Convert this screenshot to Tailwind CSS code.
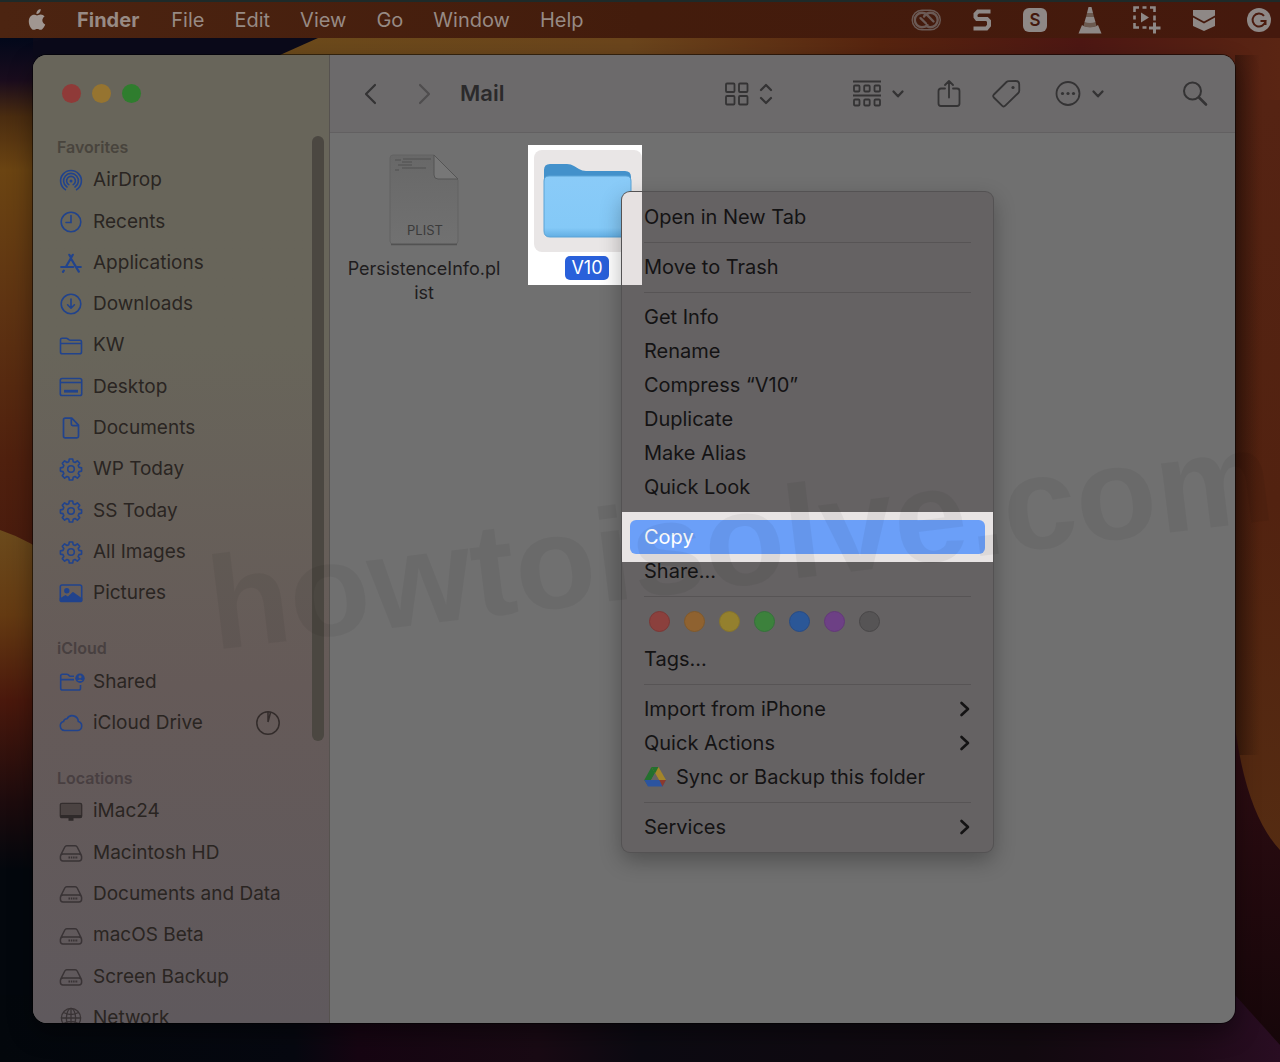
<!DOCTYPE html>
<html lang="en">
<head>
  <meta charset="UTF-8" />
  <title>Finder - Mail</title>
  <meta name="viewport" content="width=device-width, initial-scale=1" />
  <script src="https://cdn.jsdelivr.net/npm/@tailwindcss/browser@4"></script>
</head>
<body class="relative h-screen flex flex-col overflow-hidden bg-[#04080f] font-['Inter','Liberation_Sans',sans-serif] text-[#1f1d1e]">

  <!-- icon sprite -->
  <svg class="hidden" aria-hidden="true">
    <symbol id="airdrop" viewBox="0 0 24 24" fill="none" stroke="currentColor" stroke-width="1.6" stroke-linecap="round">
      <path d="M6.4 20.7a10.4 10.4 0 1 1 11.2 0M8 18a7.4 7.4 0 1 1 8 0M9.8 15.6a4.4 4.4 0 1 1 4.400 0"/><circle cx="12" cy="12" r="1.500" fill="currentColor" stroke="none"/>
    </symbol>
    <symbol id="clock" viewBox="0 0 24 24" fill="none" stroke="currentColor" stroke-width="1.6" stroke-linecap="round">
      <circle cx="12" cy="12" r="9.800"/><path d="M12 5.500v7H7"/>
    </symbol>
    <symbol id="apps" viewBox="0 0 24 24" fill="none" stroke="currentColor" stroke-width="2.200" stroke-linecap="round">
      <path d="M10.300 3.800l1.700 3M13.800 3.800L7 15.800M12.400 8.200l7.400 12.400M2.200 16h12M18.600 16h3.200M4.800 19.600l-.8 1.200"/>
    </symbol>
    <symbol id="download" viewBox="0 0 24 24" fill="none" stroke="currentColor" stroke-width="1.6" stroke-linecap="round" stroke-linejoin="round">
      <circle cx="12" cy="12" r="9.800"/><path d="M12 7v9M8.600 12.800L12 16.200l3.400-3.400"/>
    </symbol>
    <symbol id="folder" viewBox="0 0 24 24" fill="none" stroke="currentColor" stroke-width="1.6" stroke-linejoin="round">
      <path d="M1.500 18V5.800q0-1.600 1.600-1.600h4.200q.8 0 1.500.6l1 .9q.6.500 1.400.500h9.700q1.600 0 1.600 1.600V18q0 1.800-1.800 1.800H3.300Q1.500 19.800 1.500 18zM1.500 9.500h21"/>
    </symbol>
    <symbol id="desktop" viewBox="0 0 24 24" fill="none" stroke="currentColor" stroke-width="1.6">
      <rect x="1.300" y="3.500" width="21.400" height="17" rx="1.800"/><path d="M1.300 7.500h21.400"/><rect x="5" y="14.800" width="14" height="2.800" fill="currentColor" stroke="none"/>
    </symbol>
    <symbol id="doc" viewBox="0 0 24 24" fill="none" stroke="currentColor" stroke-width="1.7" stroke-linejoin="round">
      <path d="M4.500 3.800q0-1.600 1.600-1.600h6.700l6.700 7v11q0 1.600-1.600 1.600H6.100q-1.600 0-1.600-1.600zM12.300 2.500v5.600q0 1.500 1.500 1.500h5.500"/>
    </symbol>
    <symbol id="gear" viewBox="0 0 24 24" fill="none" stroke="currentColor" stroke-width="1.6" stroke-linejoin="round">
      <circle cx="12" cy="12" r="3.300"/><path d="M10.300 2h3.400l.5 2.700 1.900.8 2.300-1.600 2.300 2.300-1.500 2.300.8 1.900 2.600.5v3.200l-2.600.5-.8 1.900 1.500 2.300-2.300 2.300-2.300-1.600-1.900.8-.5 2.700h-3.400l-.5-2.700-1.900-.8-2.300 1.600-2.300-2.300 1.500-2.300-.8-1.900-2.600-.5v-3.200l2.600-.5.8-1.900-1.500-2.300 2.300-2.300 2.300 1.600 1.900-.8z"/>
    </symbol>
    <symbol id="picture" viewBox="0 0 24 24" fill="none" stroke="currentColor" stroke-width="1.6">
      <rect x="1.300" y="4" width="21.400" height="16.500" rx="1.800"/><circle cx="7.800" cy="9.800" r="1.900" fill="currentColor"/><path fill="currentColor" stroke-linejoin="round" d="M1.500 18l5-3.200 2.500 1.800 5-4.800 8.500 6.200v2H1.500z"/>
    </symbol>
    <symbol id="shared" viewBox="0 0 26 24" fill="none" stroke="currentColor" stroke-width="1.6" stroke-linejoin="round">
      <path d="M15 6.300h-3.200q-.8 0-1.400-.5l-1-.9q-.7-.6-1.500-.6H3.300q-1.600 0-1.600 1.600v12.300Q1.700 20 3.500 20h16.200q1.800 0 1.800-1.800V15M1.700 9.600H15"/>
      <circle cx="21" cy="8.200" r="4.700" fill="currentColor" stroke="none"/><circle cx="21" cy="6.700" r="1.500" fill="#645a58" stroke="none"/><path d="M18.300 11q2.700-3 5.400 0z" fill="#645a58" stroke="none"/>
    </symbol>
    <symbol id="cloud" viewBox="0 0 24 24" fill="none" stroke="currentColor" stroke-width="1.6">
      <path d="M5.600 19.500a4.600 4.600 0 0 1-1-9q.4-2.600 3.300-2.700a6.100 6.100 0 0 1 11.400 2.700 4.600 4.600 0 0 1-.6 9z"/>
    </symbol>
    <symbol id="imac" viewBox="0 0 24 24">
      <rect x="1.300" y="3.300" width="21.400" height="14.400" rx="1.600" fill="#4b4342" stroke="#342e2e" stroke-width="1.300"/><path d="M1.300 15h21.400v1.400q0 1.600-1.600 1.600H2.900q-1.600 0-1.600-1.600zM9.500 18h5v2.700h-5z" fill="#2f2a2a"/>
    </symbol>
    <symbol id="disk" viewBox="0 0 24 24" fill="none" stroke="currentColor" stroke-width="1.5" stroke-linejoin="round">
      <path d="M1.500 14.500L5.800 6q.6-1.200 2-1.200h8.400q1.400 0 2 1.200l4.300 8.500M4 13h16q2.600 0 2.600 2.700v1.600q0 2.700-2.600 2.700H4q-2.600 0-2.600-2.700v-1.600Q1.400 13 4 13z"/><path d="M9.500 16.500h9.500" stroke-dasharray="1.500 .8" stroke-width="2"/>
    </symbol>
    <symbol id="globe" viewBox="0 0 24 24" fill="none" stroke="currentColor" stroke-width="1.3">
      <circle cx="12" cy="12" r="9.600"/><ellipse cx="12" cy="12" rx="4.600" ry="9.600"/><path d="M12 2.400v19.200M2.400 12h19.200M4.500 6.500q7.500 4 15 0M4.500 17.500q7.500-4 15 0"/>
    </symbol>
    <symbol id="chev-r" viewBox="0 0 12 16" fill="none" stroke="currentColor" stroke-width="2.6" stroke-linecap="round" stroke-linejoin="round">
      <path d="M2.500 2l6.500 6-6.500 6"/>
    </symbol>
    <symbol id="chev-d" viewBox="0 0 14 10" fill="none" stroke="currentColor" stroke-width="2.3" stroke-linecap="round" stroke-linejoin="round">
      <path d="M2.500 2.500L7 7.300l4.500-4.800"/>
    </symbol>
  </svg>

  <!-- wallpaper -->
  <svg class="absolute inset-0 -z-10 w-full h-full" viewBox="0 0 1280 1062" preserveAspectRatio="none" aria-hidden="true">
    <defs>
      <linearGradient id="wLeft" x1="0" y1="0" x2="0" y2="1">
        <stop offset="0" stop-color="#02081a"/><stop offset=".07" stop-color="#1a0c1d"/><stop offset=".13" stop-color="#4a2c10"/><stop offset=".22" stop-color="#6b4412"/><stop offset=".45" stop-color="#5e3312"/><stop offset=".7" stop-color="#4f200e"/><stop offset="1" stop-color="#43160d"/>
      </linearGradient>
      <linearGradient id="wBlob" x1="0" y1="0" x2="0" y2="1">
        <stop offset="0" stop-color="#6b4a1c"/><stop offset=".25" stop-color="#643a12"/><stop offset=".5" stop-color="#4a180c"/><stop offset=".8" stop-color="#1d0b0d"/><stop offset="1" stop-color="#03070d"/>
      </linearGradient>
      <linearGradient id="wTop" x1="0" y1="0" x2="1" y2="0">
        <stop offset="0" stop-color="#6c4a1b"/><stop offset=".35" stop-color="#6b451c"/><stop offset=".6" stop-color="#57240f"/><stop offset=".8" stop-color="#4d1713"/><stop offset="1" stop-color="#5a2513"/>
      </linearGradient>
      <linearGradient id="wRight" x1="0" y1="0" x2="0" y2="1">
        <stop offset="0" stop-color="#552313"/><stop offset=".5" stop-color="#522210"/><stop offset="1" stop-color="#552d12"/>
      </linearGradient>
      <linearGradient id="wEdge" x1="0" y1="0" x2="1" y2="0">
        <stop offset="0" stop-color="#200c06" stop-opacity=".5"/><stop offset="1" stop-color="#200c06" stop-opacity="0"/>
      </linearGradient>
      <linearGradient id="wLow" x1="0" y1="0" x2="0" y2="1">
        <stop offset="0" stop-color="#300d13"/><stop offset="1" stop-color="#150609"/>
      </linearGradient>
      <linearGradient id="wFloor" x1="0" y1="0" x2="1" y2="0">
        <stop offset="0" stop-color="#03070c"/><stop offset=".23" stop-color="#060810"/><stop offset=".28" stop-color="#160512"/><stop offset=".42" stop-color="#190a14"/><stop offset=".5" stop-color="#0c0a12"/><stop offset=".8" stop-color="#120a10"/><stop offset=".93" stop-color="#1e0a18"/><stop offset="1" stop-color="#290d22"/>
      </linearGradient>
    </defs>
    <rect width="1280" height="1062" fill="#03070d"/>
    <path d="M0 38h330v602H0z" fill="url(#wLeft)"/>
    <path d="M0 530Q60 550 120 620V870H0z" fill="url(#wBlob)"/>
    <path d="M33 38h300v20H33z" fill="#0b0a1a"/>
    <path d="M318 38H1280v200H280V55z" fill="url(#wTop)"/>
    <path d="M1200 100h80v800h-80z" fill="url(#wRight)"/>
    <path d="M1235 55h25v700h-25z" fill="url(#wEdge)"/>
    <path d="M1232 700q10 110 48 150v212h-60z" fill="url(#wLow)"/>
    <path d="M0 995h1235l45 50v17H0z" fill="url(#wFloor)"/>
  </svg>

  <!-- menu bar -->
  <header class="flex h-[38px] shrink-0 items-center border-t-2 border-[#1e2a29] bg-linear-to-r from-[#4c2411] via-[#431c0c] to-[#45190d] pl-[27px] pr-[9px] text-[#978a84]">
    <svg class="w-5 h-6 mr-[30px] shrink-0" viewBox="0 0 20 24" fill="#a09691"><path d="M13.700 1q.2 2-1.100 3.500T9.400 6q-.2-1.900 1-3.300T13.700 1zM10 7.400c1 0 2-.9 3.700-.9 1.600 0 3 .8 3.900 2-3.300 2-2.800 6.500.6 7.900-.8 2.300-2.700 5.400-4.600 5.400-1.300 0-1.800-.8-3.400-.8s-2.100.8-3.400.8C4.500 21.800 1.800 17.600 1.800 13.400c0-4.300 2.700-6.700 5.100-6.700 1.500 0 2.400.7 3.100.7z"/></svg>
    <nav class="flex gap-[30px] text-xl leading-6">
      <button class="pr-0.5 font-bold">Finder</button>
      <button>File</button>
      <button>Edit</button>
      <button>View</button>
      <button>Go</button>
      <button>Window</button>
      <button>Help</button>
    </nav>
    <div class="ml-auto flex items-center gap-[31px] text-[#8e8886]">
      <svg class="w-[30px] h-6" viewBox="0 0 30 24" fill="none" stroke="#6b5a55" stroke-width="2.4" stroke-linecap="round"><path d="M11 2.200h8.500a9.800 9.800 0 0 1 0 19.600H11a9.800 9.800 0 0 1 0-19.600z" stroke-width="1.400"/><path d="M16.500 17.200q-2 2-5.500 2a7.200 7.200 0 0 1 0-14.400q3 0 5 2.100l6.500 6.600M9.500 10.200l5.500 5.300M13 8.500q2.500-3.700 6.500-3.700a7.200 7.200 0 0 1 0 14.400q-2 0-3.500-1"/></svg>
      <svg class="w-5 h-6" viewBox="0 0 20 24" fill="none" stroke="currentColor" stroke-width="4"><path d="M18.500 3.500H6L3.500 6v3L5 11h10l2 2v4.500l-2.500 3H1.500"/></svg>
      <svg class="w-6 h-6" viewBox="0 0 24 24"><rect width="24" height="24" rx="6" fill="currentColor"/><text x="12" y="18" text-anchor="middle" font-size="17" font-weight="600" fill="#43180d">S</text></svg>
      <svg class="w-6 h-7" viewBox="0 0 24 28" fill="currentColor"><path d="M10.500 1h3l1.500 6H9z"/><path d="M9 7h6l1 4H8zM6.500 16h11l1 4q-6.500 2.500-13 0z" fill="#6c5a50"/><path d="M8 11h8l1.500 5q-5.500 2-11 0zM4 19l1.500 1q6.500 2.600 13 0L20 19l3.500 8.500H.5z"/></svg>
      <svg class="w-7 h-7" viewBox="0 0 28 28" fill="none" stroke="currentColor" stroke-width="2.6"><path d="M1.500 6V1.500H6M9.500 1.500h4M17 1.500h4.500V6M21.500 9.500v5M1.500 9.500v4M1.500 17v4.500H6M9.500 21.500h4"/><path d="M8 6.500l8 5-8 5z" fill="currentColor" stroke="none"/><path d="M21.500 16.500v11M16 22h11.500" stroke-width="3"/></svg>
      <svg class="w-6 h-6" viewBox="0 0 24 24" fill="currentColor"><path d="M1 2h22v5.500l-11 6-11-6zM1 9.500l11 6 11-6v8.500l-11 5-11-5z"/></svg>
      <svg class="w-6 h-6" viewBox="0 0 24 24"><circle cx="12" cy="12" r="12" fill="currentColor"/><path d="M17 7.800A6.500 6.500 0 1 0 18.500 13H13.500M18.500 12.500v4.500" fill="none" stroke="#4b1b0e" stroke-width="2"/></svg>
    </div>
  </header>

  <!-- Finder window -->
  <div class="mt-[17px] mb-[39px] ml-[33px] mr-[45px] flex min-h-0 flex-1 overflow-hidden rounded-[14px] bg-[#707070] shadow-[0_0_0_1px_rgba(0,0,0,0.5),0_10px_24px_rgba(0,0,0,0.4)]">

    <aside class="relative w-[297px] shrink-0 overflow-hidden border-r border-[#56524f] bg-linear-to-b from-[#68655a] from-30% via-[#655a58] via-65% to-[#5f595d] text-[19px] text-[#2a2522]">
      <div class="flex h-[76px] items-center gap-[11px] pl-[29px]">
        <button class="size-[19px] rounded-full bg-[#8f3a38]" aria-label="Close"></button>
        <button class="size-[19px] rounded-full bg-[#967430]" aria-label="Minimize"></button>
        <button class="size-[19px] rounded-full bg-[#2f7d2e]" aria-label="Zoom"></button>
      </div>

      <h2 class="mt-1 mb-px h-6 pl-6 text-base font-semibold text-[#48443d]">Favorites</h2>
      <ul class="flex h-[454px] flex-col pl-[26px] *:flex *:flex-1 *:items-center">
        <li><a href="#" class="flex items-center gap-2.5"><svg class="size-6 text-[#21438c]"><use href="#airdrop"/></svg>AirDrop</a></li>
        <li><a href="#" class="flex items-center gap-2.5"><svg class="size-6 text-[#21438c]"><use href="#clock"/></svg>Recents</a></li>
        <li><a href="#" class="flex items-center gap-2.5"><svg class="size-6 text-[#21438c]"><use href="#apps"/></svg>Applications</a></li>
        <li><a href="#" class="flex items-center gap-2.5"><svg class="size-6 text-[#21438c]"><use href="#download"/></svg>Downloads</a></li>
        <li><a href="#" class="flex items-center gap-2.5"><svg class="size-6 text-[#21438c]"><use href="#folder"/></svg>KW</a></li>
        <li><a href="#" class="flex items-center gap-2.5"><svg class="size-6 text-[#21438c]"><use href="#desktop"/></svg>Desktop</a></li>
        <li><a href="#" class="flex items-center gap-2.5"><svg class="size-6 text-[#21438c]"><use href="#doc"/></svg>Documents</a></li>
        <li><a href="#" class="flex items-center gap-2.5"><svg class="size-6 text-[#21438c]"><use href="#gear"/></svg>WP Today</a></li>
        <li><a href="#" class="flex items-center gap-2.5"><svg class="size-6 text-[#21438c]"><use href="#gear"/></svg>SS Today</a></li>
        <li><a href="#" class="flex items-center gap-2.5"><svg class="size-6 text-[#21438c]"><use href="#gear"/></svg>All Images</a></li>
        <li><a href="#" class="flex items-center gap-2.5"><svg class="size-6 text-[#21438c]"><use href="#picture"/></svg>Pictures</a></li>
      </ul>

      <h2 class="mt-[22px] mb-px h-6 pl-6 text-base font-semibold text-[#484040]">iCloud</h2>
      <ul class="flex h-[83px] flex-col pl-[26px] pr-[49px] *:flex *:flex-1 *:items-center">
        <li><a href="#" class="flex items-center gap-2"><svg class="h-6 w-[26px] text-[#21438c]"><use href="#shared"/></svg>Shared</a></li>
        <li><a href="#" class="flex items-center gap-2.5"><svg class="size-6 text-[#21438c]"><use href="#cloud"/></svg>iCloud Drive</a>
          <svg class="ml-auto size-6" viewBox="0 0 24 24" fill="none" stroke="#332c2b" stroke-width="1.500"><circle cx="12" cy="12" r="11.200"/><path d="M12 11V1M12 11l2.500-9.500" /></svg></li>
      </ul>

      <h2 class="mt-[22px] mb-px h-6 pl-6 text-base font-semibold text-[#483f41]">Locations</h2>
      <ul class="flex h-[248px] flex-col pl-[26px] *:flex *:flex-1 *:items-center">
        <li><a href="#" class="flex items-center gap-2.5"><svg class="size-6"><use href="#imac"/></svg>iMac24</a></li>
        <li><a href="#" class="flex items-center gap-2.5"><svg class="size-6 text-[#393335]"><use href="#disk"/></svg>Macintosh HD</a></li>
        <li><a href="#" class="flex items-center gap-2.5"><svg class="size-6 text-[#393335]"><use href="#disk"/></svg>Documents and Data</a></li>
        <li><a href="#" class="flex items-center gap-2.5"><svg class="size-6 text-[#393335]"><use href="#disk"/></svg>macOS Beta</a></li>
        <li><a href="#" class="flex items-center gap-2.5"><svg class="size-6 text-[#393335]"><use href="#disk"/></svg>Screen Backup</a></li>
        <li><a href="#" class="flex items-center gap-2.5"><svg class="size-6 text-[#393335]"><use href="#globe"/></svg>Network</a></li>
      </ul>

      <!-- scrollbar thumb -->
      <div class="absolute right-[5px] top-[81px] h-[605px] w-3 rounded-full bg-[#4b4741]"></div>
    </aside>

    <main class="flex min-w-0 flex-1 flex-col">
      <!-- toolbar -->
      <div class="flex h-[78px] shrink-0 items-center border-b border-[#626061] bg-[#6c6a6b] pl-[33px] pr-[27px] text-[#343334]">
        <button aria-label="Back"><svg class="h-6 w-4" viewBox="0 0 16 24" fill="none" stroke="currentColor" stroke-width="2.200" stroke-linecap="round" stroke-linejoin="round"><path d="M12 3L3 12l9 9"/></svg></button>
        <button class="ml-[37px] text-[#4f4d4e]" aria-label="Forward"><svg class="h-6 w-4" viewBox="0 0 16 24" fill="none" stroke="currentColor" stroke-width="2.200" stroke-linecap="round" stroke-linejoin="round"><path d="M4 3l9 9-9 9"/></svg></button>
        <h1 class="ml-7 text-[22px] font-semibold text-[#2b2a2b]">Mail</h1>

        <button class="ml-auto flex items-center gap-2.5" aria-label="View as icons">
          <svg class="size-6" viewBox="0 0 24 24" fill="none" stroke="currentColor" stroke-width="1.800"><rect x="1" y="1.500" width="8.500" height="8.500" rx="1"/><rect x="14" y="1.500" width="8.500" height="8.500" rx="1"/><rect x="1" y="14" width="8.500" height="8.500" rx="1"/><rect x="14" y="14" width="8.500" height="8.500" rx="1"/></svg>
          <svg class="h-6 w-3.5" viewBox="0 0 14 24" fill="none" stroke="currentColor" stroke-width="2.200" stroke-linecap="round" stroke-linejoin="round"><path d="M2 8l5-5 5 5M2 16l5 5 5-5"/></svg>
        </button>
        <button class="ml-20 flex items-center gap-2.5" aria-label="Group items">
          <svg class="h-7 w-7" viewBox="0 0 28 28" fill="none" stroke="currentColor" stroke-width="1.800"><path d="M0 1.500h28M0 15.500h28"/><rect x="1" y="5.500" width="5.500" height="6" rx="1"/><rect x="11.200" y="5.500" width="5.500" height="6" rx="1"/><rect x="21.500" y="5.500" width="5.500" height="6" rx="1"/><rect x="1" y="19.500" width="5.500" height="6" rx="1"/><rect x="11.200" y="19.500" width="5.500" height="6" rx="1"/><rect x="21.500" y="19.500" width="5.500" height="6" rx="1"/></svg>
          <svg class="h-2.5 w-3.5"><use href="#chev-d"/></svg>
        </button>
        <button class="ml-8" aria-label="Share"><svg class="h-7 w-6" viewBox="0 0 24 28" fill="none" stroke="currentColor" stroke-width="1.800" stroke-linecap="round" stroke-linejoin="round"><path d="M8 8.500H4q-2.500 0-2.500 2.500v12.500Q1.500 26 4 26h16q2.500 0 2.500-2.500V11q0-2.500-2.500-2.500h-4M12 17.500V1M8 5l4-4 4 4"/></svg></button>
        <button class="ml-[30px]" aria-label="Tags"><svg class="size-[30px]" viewBox="0 0 30 30" fill="none" stroke="currentColor" stroke-width="1.800" stroke-linejoin="round"><path d="M15.500 3q1-.9 2.300-.9l7.200-.1q3 0 3.200 3l.1 6.300q0 1.700-1 2.700L14.300 26.700q-1.500 1.500-3 .1L2.800 18.500q-1.300-1.500.1-3z"/><circle cx="22" cy="8.500" r="1.600" fill="currentColor" stroke="none"/></svg></button>
        <button class="ml-[34px] flex items-center gap-2.5" aria-label="More">
          <svg class="size-[26px]" viewBox="0 0 26 26" fill="none" stroke="currentColor" stroke-width="1.800"><circle cx="13" cy="12.500" r="11.500"/><g fill="currentColor" stroke="none"><circle cx="7.500" cy="12.500" r="1.600"/><circle cx="13" cy="12.500" r="1.600"/><circle cx="18.500" cy="12.500" r="1.600"/></g></svg>
          <svg class="h-2.5 w-3.5"><use href="#chev-d"/></svg>
        </button>
        <button class="ml-[77px]" aria-label="Search"><svg class="size-[26px]" viewBox="0 0 26 26" fill="none" stroke="currentColor" stroke-width="2" stroke-linecap="round"><circle cx="10.500" cy="10" r="8.500"/><path d="M17 16.500l7 7" stroke-width="2.600"/></svg></button>
      </div>

      <!-- files -->
      <div class="relative flex flex-1 items-start gap-[27px] pl-[17px] pt-3">
        <figure class="w-[154px] pt-2 text-center">
          <svg class="mx-auto h-24 w-[74px]" viewBox="0 0 74 96">
            <defs>
              <linearGradient id="page" x1="0" y1="0" x2="0" y2="1"><stop offset="0" stop-color="#686868"/><stop offset="1" stop-color="#717171"/></linearGradient>
            </defs>
            <path d="M3 5q0-3 3-3h41l24 25v61q0 3-3 3H6q-3 0-3-3z" fill="url(#page)" stroke="#636363"/>
            <path d="M4 91.500h66" stroke="#525252" stroke-width="1.500"/>
            <path d="M47 2v20q0 4 4 4h20z" fill="#777" stroke="#555"/>
            <path d="M8 7h6M16 6h28M15 9h10M11 12h13M8 17h4M15 15h24M13 12h12" stroke="#505050" stroke-width="1.200"/>
            <text x="38" y="82" text-anchor="middle" font-size="13" fill="#3b3b3b">PLIST</text>
          </svg>
          <figcaption class="mt-2 text-[18px] leading-6 break-all">PersistenceInfo.plist</figcaption>
        </figure>

        <figure class="h-[140px] w-[114px] overflow-hidden bg-white pt-[5px] pl-1.5 text-center">
          <div class="h-[102px] rounded-lg bg-[#e9e6e6] pt-3">
            <svg class="mx-auto h-20 w-[92px]" viewBox="0 0 92 80">
              <defs>
                <linearGradient id="fold" x1="0" y1="0" x2="0" y2="1"><stop offset="0" stop-color="#8acbf8"/><stop offset=".85" stop-color="#84c9f7"/><stop offset="1" stop-color="#62aee3"/></linearGradient>
              </defs>
              <path d="M2 8q0-6 6-6h17q4 0 7 2l5 3q3 2 7 2h39q6 0 6 6v12H2z" fill="#4391cb"/>
              <path d="M2 19q0-5 5-5h77q5 0 5 5v50q0 6-6 6H8q-6 0-6-6z" fill="url(#fold)" stroke="#5aa3d6"/>
            </svg>
          </div>
          <figcaption class="mt-1 pr-0.5"><span class="inline-block rounded-[5px] bg-[#2960da] px-1.5 text-[18px] leading-6 text-white">V10</span></figcaption>
        </figure>

        <!-- context menu -->
        <div class="absolute left-[292px] top-[59px] w-[371px] rounded-lg bg-[#656263] py-2 text-xl leading-[34px] text-[#141314] shadow-[0_0_0_1px_#545253,0_8px_22px_rgba(0,0,0,0.3)]">
          <!-- part of the menu lit up by the folder highlight -->
          <div class="absolute left-0 top-0 h-[93px] w-5 rounded-tl-lg bg-[#e6e1e1]"></div>
          <ul class="relative">
            <li><button class="block h-[34px] px-[22px]">Open in New Tab</button></li>
            <li class="mx-[22px] flex h-4 items-center"><hr class="w-full border-[#575455]" /></li>
            <li><button class="block h-[34px] px-[22px]">Move to Trash</button></li>
            <li class="mx-[22px] flex h-4 items-center"><hr class="w-full border-[#575455]" /></li>
            <li><button class="block h-[34px] px-[22px]">Get Info</button></li>
            <li><button class="block h-[34px] px-[22px]">Rename</button></li>
            <li><button class="block h-[34px] px-[22px]">Compress “V10”</button></li>
            <li><button class="block h-[34px] px-[22px]">Duplicate</button></li>
            <li><button class="block h-[34px] px-[22px]">Make Alias</button></li>
            <li><button class="block h-[34px] px-[22px]">Quick Look</button></li>
            <li class="mx-[22px] flex h-4 items-center"><hr class="w-full border-[#575455]" /></li>
            <li class="relative -my-2 bg-[#e8e4e4] px-2 py-2"><button class="block h-[34px] w-full rounded-md bg-[#6b9ff8] px-3.5 text-left text-white">Copy</button></li>
            <li class="relative"><button class="block h-[34px] px-[22px]">Share...</button></li>
            <li class="mx-[22px] flex h-4 items-center"><hr class="w-full border-[#575455]" /></li>
            <li class="flex h-[38px] items-center gap-3.5 px-[27px] pb-1">
              <button class="size-[21px] rounded-full border border-[#7c3634] bg-[#8b403d]" aria-label="Red"></button>
              <button class="size-[21px] rounded-full border border-[#80592b] bg-[#8f6230]" aria-label="Orange"></button>
              <button class="size-[21px] rounded-full border border-[#86742b] bg-[#94802e]" aria-label="Yellow"></button>
              <button class="size-[21px] rounded-full border border-[#34723a] bg-[#3c813c]" aria-label="Green"></button>
              <button class="size-[21px] rounded-full border border-[#264b86] bg-[#2b5797]" aria-label="Blue"></button>
              <button class="size-[21px] rounded-full border border-[#633879] bg-[#6d4085]" aria-label="Purple"></button>
              <button class="size-[21px] rounded-full border border-[#484647] bg-[#565455]" aria-label="Gray"></button>
            </li>
            <li><button class="block h-[34px] px-[22px]">Tags...</button></li>
            <li class="mx-[22px] flex h-4 items-center"><hr class="w-full border-[#575455]" /></li>
            <li><button class="flex h-[34px] w-full items-center justify-between px-[22px]">Import from iPhone<svg class="h-4 w-3"><use href="#chev-r"/></svg></button></li>
            <li><button class="flex h-[34px] w-full items-center justify-between px-[22px]">Quick Actions<svg class="h-4 w-3"><use href="#chev-r"/></svg></button></li>
            <li><button class="flex h-[34px] items-center gap-2.5 px-[22px]">
              <svg class="h-5 w-[22px]" viewBox="0 0 22 20"><path d="M7.500 0h7l-3.700 6.300L4 18.500.3 13z" fill="#23702e"/><path d="M7.500 0h7L22 13h-7z" fill="#a3852a"/><path d="M7.500 0h7L11 6.500z" fill="#23702e"/><path d="M.3 13H22l-3.500 6.500H4z" fill="#2c54a0"/><path d="M15.300 13H22l-3.500 6.500z" fill="#8c3a2c"/><path d="M11 6.500l3.800 6.500H7.200z" fill="#656263"/></svg>
              Sync or Backup this folder</button></li>
            <li class="mx-[22px] flex h-4 items-center"><hr class="w-full border-[#575455]" /></li>
            <li><button class="flex h-[34px] w-full items-center justify-between px-[22px]">Services<svg class="h-4 w-3"><use href="#chev-r"/></svg></button></li>
          </ul>
        </div>
      </div>
    </main>
  </div>

  <!-- watermark -->
  <p class="pointer-events-none absolute left-[205px] top-[465px] -rotate-7 whitespace-nowrap font-['Liberation_Sans',sans-serif] text-[132px] leading-[150px] font-bold text-black/5" aria-hidden="true">howtoisolve.com</p>
</body>
</html>
